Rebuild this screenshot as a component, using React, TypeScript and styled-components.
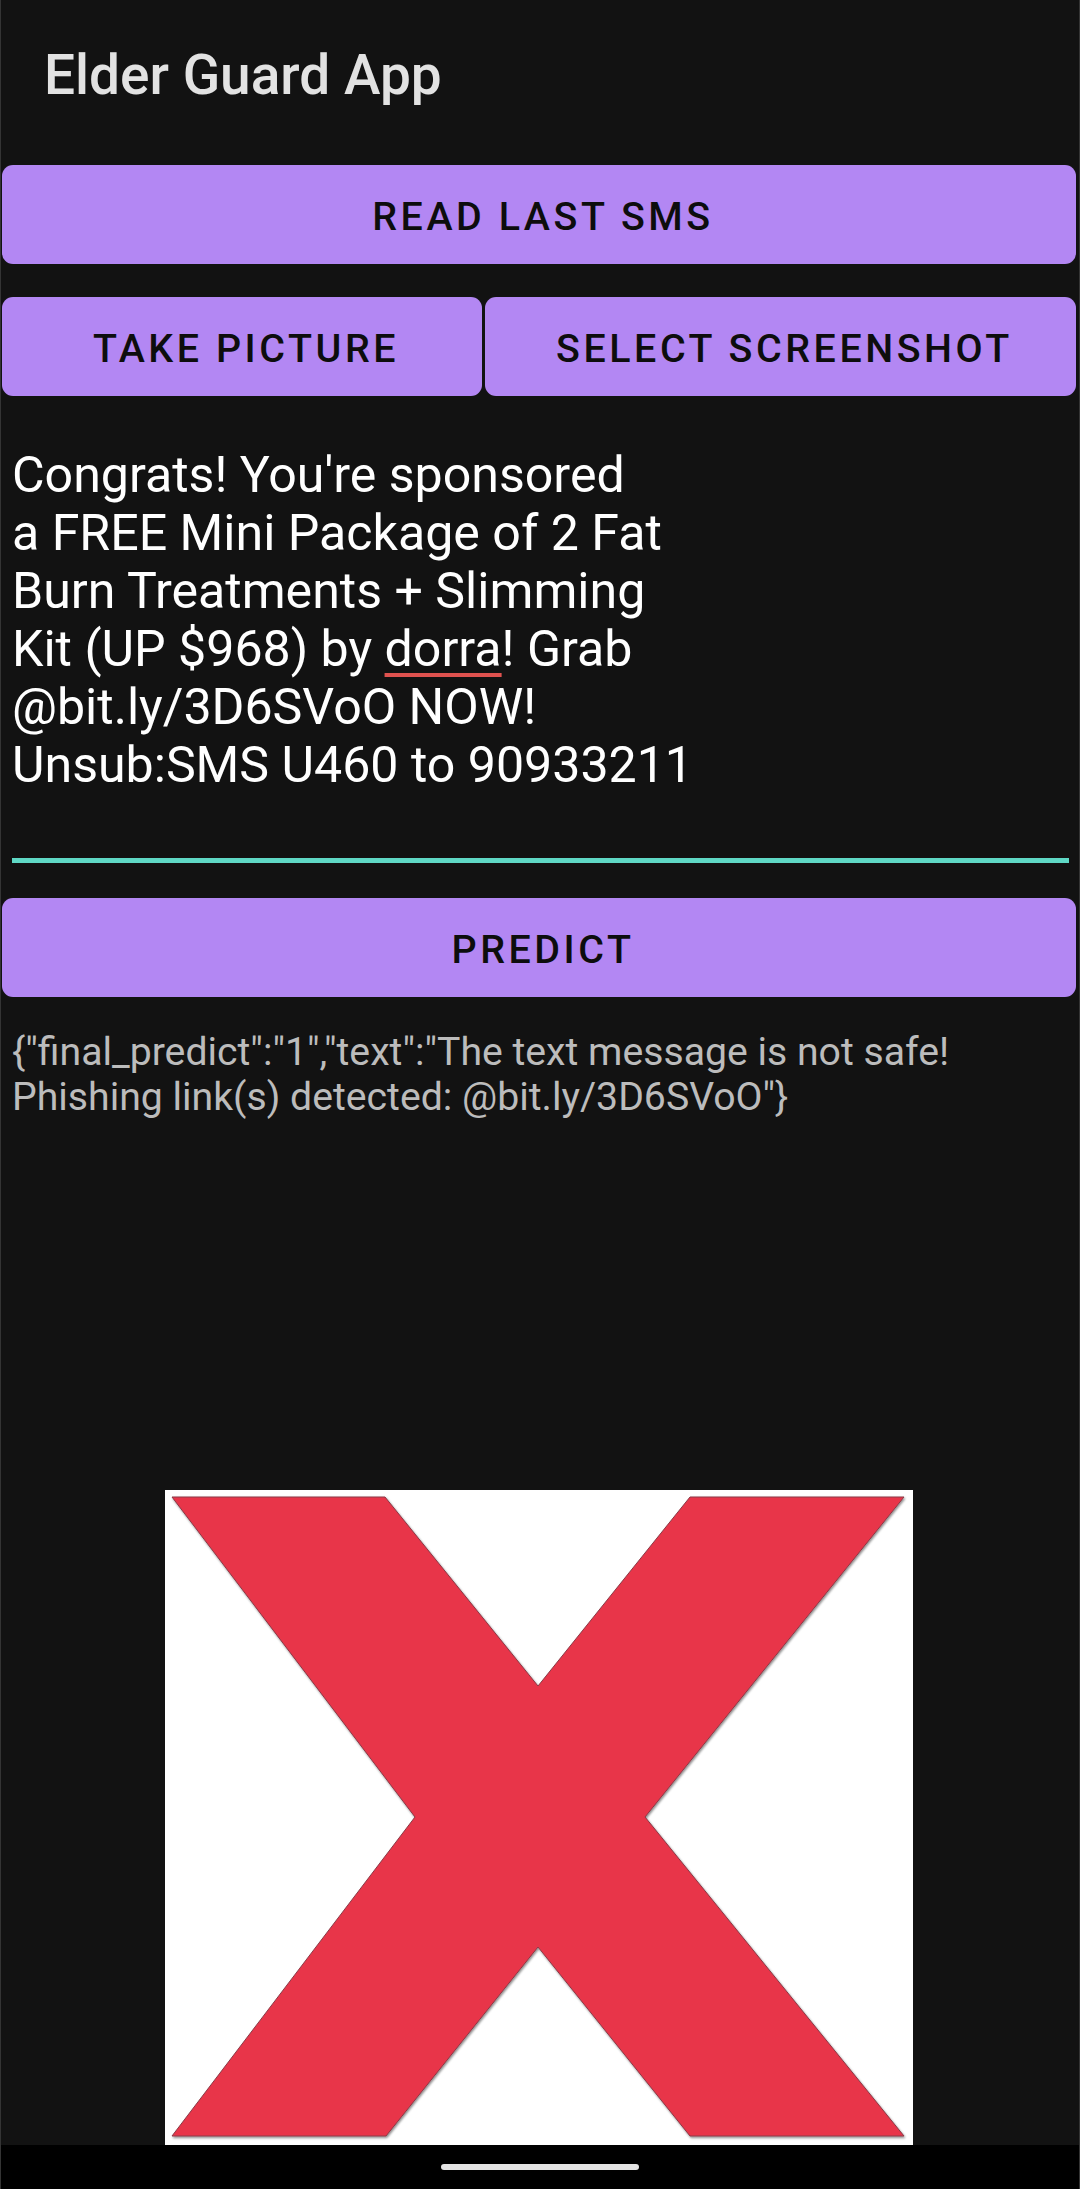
import React from "react";
import styled, { createGlobalStyle } from "styled-components";

const GlobalStyle = createGlobalStyle`
  html, body {
    margin: 0;
    padding: 0;
    background: #121212;
  }
  body {
    font-family: Roboto, "Noto Sans", "Liberation Sans", sans-serif;
  }
  * { box-sizing: border-box; }
`;

const Screen = styled.div`
  width: 1080px;
  height: 2189px;
  display: flex;
  flex-direction: column;
  background: #121212;
  border-left: 1px solid #343434;
  border-right: 1px solid #343434;
  overflow: hidden;
`;

const Header = styled.header`
  height: 165px;
  padding: 42px 0 0 43px;
`;

const Title = styled.h1`
  margin: 0;
  font-size: 55px;
  line-height: 66px;
  font-weight: 500;
  color: #e2e2e2;
  letter-spacing: 0;
`;

const ButtonRow = styled.div<{ $top?: number }>`
  display: flex;
  gap: 3px;
  margin: ${(p) => p.$top ?? 0}px 3px 0 1px;
`;

const ActionButton = styled.button<{ $basis?: number }>`
  flex: ${(p) => (p.$basis ? `0 0 ${p.$basis}px` : "1 1 0")};
  height: 99px;
  border: none;
  border-radius: 11px;
  background: #b387f3;
  color: #0d0d0d;
  font-family: Roboto, "Noto Sans", sans-serif;
  font-size: 39.4px;
  font-weight: 500;
  letter-spacing: 3.55px;
  text-transform: uppercase;
  display: flex;
  align-items: center;
  justify-content: center;
  padding: 4px 0 0 8px;
  cursor: pointer;
`;

const MessageField = styled.div`
  margin: 50px 10px 0 11px;
  padding: 0 0 64px 0;
  border-bottom: 5px solid #5fd8c5;
  font-size: 50.1px;
  line-height: 58px;
  color: #ffffff;
  font-weight: 400;
`;

const Line = styled.div`
  white-space: nowrap;
`;

const Misspelled = styled.span`
  text-decoration: underline;
  text-decoration-color: #e0524f;
  text-decoration-thickness: 4px;
  text-underline-offset: 7px;
  text-decoration-skip-ink: none;
`;

const ResultText = styled.div`
  margin: 33px 0 0 11px;
  font-size: 39.2px;
  line-height: 45px;
  color: #bcbcbc;
  white-space: nowrap;
`;

const ImageArea = styled.div`
  flex: 1;
  display: flex;
  align-items: flex-end;
  justify-content: center;
`;

const ImageFrame = styled.div`
  width: 748px;
  height: 655px;
  background: #ffffff;
  margin-left: -2px;
`;

const XSvg = styled.svg`
  display: block;
  width: 748px;
  height: 655px;
`;

const NavBar = styled.div`
  height: 44px;
  background: #000000;
  display: flex;
  align-items: center;
  justify-content: center;
  margin: 0 -1px;
`;

const NavPill = styled.div`
  width: 198px;
  height: 6px;
  border-radius: 3px;
  background: #e4e4e4;
`;

const messageLines: React.ReactNode[] = [
  "Congrats! You're sponsored",
  "a FREE Mini Package of 2 Fat",
  "Burn Treatments + Slimming",
  <>
    Kit (UP $968) by <Misspelled>dorra</Misspelled>! Grab
  </>,
  "@bit.ly/3D6SVoO NOW!",
  "Unsub:SMS U460 to 90933211",
];

const resultLines = [
  '{"final_predict":"1","text":"The text message is not safe!',
  'Phishing link(s) detected: @bit.ly/3D6SVoO"}',
];

function RedX() {
  return (
    <XSvg viewBox="0 0 748 655" xmlns="http://www.w3.org/2000/svg">
      <defs>
        <filter id="xshadow" x="-5%" y="-5%" width="110%" height="110%">
          <feDropShadow dx="1" dy="1.5" stdDeviation="1" floodColor="#000" floodOpacity="0.45" />
        </filter>
      </defs>
      <polygon
        points="7,7 220,7 373,196 525,7 739,7 480,327 739,646 525,646 373,457 221,646 7,646 250,327"
        fill="#e8344a"
        stroke="#8c3a46"
        strokeWidth="1"
        filter="url(#xshadow)"
      />
    </XSvg>
  );
}

export default function App() {
  return (
    <>
      <GlobalStyle />
      <Screen>
        <Header>
          <Title>Elder Guard App</Title>
        </Header>
        <ButtonRow>
          <ActionButton>Read last SMS</ActionButton>
        </ButtonRow>
        <ButtonRow $top={33}>
          <ActionButton $basis={480}>Take picture</ActionButton>
          <ActionButton>Select screenshot</ActionButton>
        </ButtonRow>
        <MessageField>
          {messageLines.map((l, i) => (
            <Line key={i}>{l}</Line>
          ))}
        </MessageField>
        <ButtonRow $top={35}>
          <ActionButton>Predict</ActionButton>
        </ButtonRow>
        <ResultText>
          {resultLines.map((l, i) => (
            <Line key={i}>{l}</Line>
          ))}
        </ResultText>
        <ImageArea>
          <ImageFrame>
            <RedX />
          </ImageFrame>
        </ImageArea>
        <NavBar>
          <NavPill />
        </NavBar>
      </Screen>
    </>
  );
}
